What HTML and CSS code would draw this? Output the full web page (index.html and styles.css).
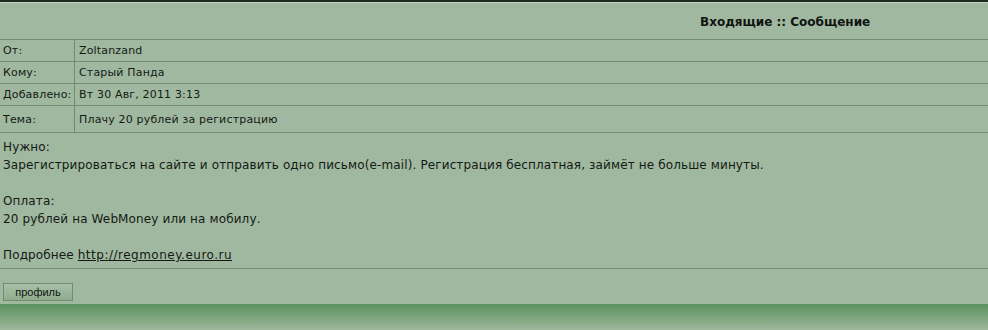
FILE: index.html
```html
<!DOCTYPE html>
<html lang="ru">
<head>
    <meta charset="UTF-8">
    <title>Входящие :: Сообщение</title>
    <link rel="stylesheet" href="styles.css">
</head>
<body>
    <div class="page">
        <div class="title-row">
            <span class="title">Входящие :: Сообщение</span>
        </div>
        <table class="info">
            <tr>
                <td class="label">От:</td>
                <td>Zoltanzand</td>
            </tr>
            <tr>
                <td class="label">Кому:</td>
                <td>Старый Панда</td>
            </tr>
            <tr>
                <td class="label">Добавлено:</td>
                <td>Вт 30 Авг, 2011 3:13</td>
            </tr>
            <tr class="last">
                <td class="label">Тема:</td>
                <td>Плачу 20 рублей за регистрацию</td>
            </tr>
        </table>
        <div class="message">
            Нужно:<br>
            Зарегистрироваться на сайте и отправить одно письмо(e-mail). Регистрация бесплатная, займёт не больше минуты.<br>
            <br>
            Оплата:<br>
            20 рублей на WebMoney или на мобилу.<br>
            <br>
            Подробнее <a href="#">http://regmoney.euro.ru</a>
        </div>
        <div class="actions">
            <button class="btn">профиль</button>
        </div>
        <div class="footer"></div>
    </div>
</body>
</html>
```

FILE: styles.css
```css
body {
    margin: 0;
    background-color: #a0b8a0;
    font-family: "DejaVu Sans", Verdana, sans-serif;
    color: #141a14;
}
.page {
    border-top: 2px solid #1c2a20;
    box-shadow: inset 0 1px 0 #c4d4c2;
}
.title-row {
    height: 38px;
    padding: 2px 0 0 700px;
    border-bottom: 1px solid #6f8e6f;
    box-sizing: border-box;
    display: flex;
    align-items: center;
}
.title {
    font-size: 12px;
    font-weight: bold;
    color: #101410;
}
.info {
    width: 100%;
    border-collapse: collapse;
    font-size: 11px;
    letter-spacing: 0.17px;
}
.info td {
    height: 21px;
    padding: 0 0 0 4px;
    border-bottom: 1px solid #6f8e6f;
}
.info tr.last td {
    height: 26px;
}
.info td.label {
    width: 71px;
    padding-left: 3px;
    border-right: 1px solid #6f8e6f;
    white-space: nowrap;
}
.message {
    padding: 5px 3px 4px;
    font-size: 12px;
    letter-spacing: 0.13px;
    line-height: 18px;
    border-bottom: 1px solid #6f8e6f;
}
.message a {
    color: #141a14;
    letter-spacing: 0.5px;
}
.actions {
    padding: 14px 3px 0;
}
.btn {
    display: block;
    width: 70px;
    height: 18px;
    padding: 0;
    font-family: "Liberation Sans", Arial, sans-serif;
    font-size: 11px;
    color: #101410;
    background: linear-gradient(to bottom, #a8c0a8, #8eac8e);
    border: 1px solid #6f8e6f;
    cursor: pointer;
}
.footer {
    height: 27px;
    margin-top: 3px;
    background: linear-gradient(to bottom, #5c905e, #7ea67e 50%, #a0b8a0);
}
```
